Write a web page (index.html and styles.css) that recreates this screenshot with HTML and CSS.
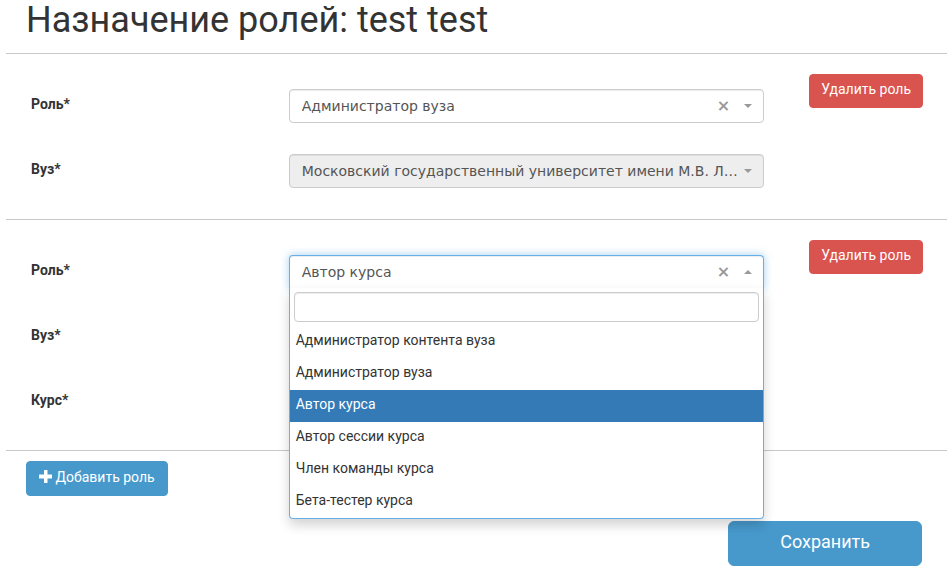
FILE: index.html
```html
<!DOCTYPE html>
<html lang="ru">
<head>
<meta charset="utf-8">
<title>Назначение ролей</title>
<link rel="stylesheet" href="styles.css">
</head>
<body>
<form class="page">
  <h1 class="title">Назначение ролей: test test</h1>

  <section class="role">
    <div class="fields">
      <label class="label" for="role-1">Роль*</label>
      <div class="picker">
        <select class="select" id="role-1"><option>Администратор вуза</option></select>
        <button class="clear" type="button">×</button>
        <span class="arrow"></span>
      </div>
      <label class="label" for="org-1">Вуз*</label>
      <div class="picker">
        <select class="select" id="org-1" disabled><option>Московский государственный университет имени М.В. Ломоносова</option></select>
        <span class="arrow"></span>
      </div>
    </div>
    <button class="btn btn-danger" type="button">Удалить роль</button>
  </section>

  <section class="role">
    <div class="fields">
      <label class="label" for="role-2">Роль*</label>
      <div class="picker picker-open">
        <select class="select" id="role-2"><option>Автор курса</option></select>
        <button class="clear" type="button">×</button>
        <span class="arrow"></span>
        <div class="menu">
          <div class="search"><input class="search-input" type="search"></div>
          <ul class="options" role="listbox">
            <li class="option" role="option">Администратор контента вуза</li>
            <li class="option" role="option">Администратор вуза</li>
            <li class="option option-active" role="option" aria-selected="true">Автор курса</li>
            <li class="option" role="option">Автор сессии курса</li>
            <li class="option" role="option">Член команды курса</li>
            <li class="option" role="option">Бета-тестер курса</li>
          </ul>
        </div>
      </div>
      <label class="label" for="org-2">Вуз*</label>
      <div class="picker"><select class="select" id="org-2"></select></div>
      <label class="label" for="course-2">Курс*</label>
      <div class="picker"><select class="select" id="course-2"></select></div>
    </div>
    <button class="btn btn-danger" type="button">Удалить роль</button>
  </section>

  <footer class="actions">
    <button class="btn btn-primary btn-add" type="button">
      <svg class="plus" viewBox="0 0 13 13" aria-hidden="true"><path d="M5 0.5Q5 0 5.5 0H8Q8.500 0 8.500 0.500V4.500H12.500Q13 4.500 13 5V8Q13 8.500 12.500 8.500H8.500V12.500Q8.500 13 8 13H5.500Q5 13 5 12.500V8.500H0.500Q0 8.500 0 8V5Q0 4.500 0.500 4.500H5Z"/></svg>
      Добавить роль
    </button>
    <button class="btn btn-primary btn-save" type="submit">Сохранить</button>
  </footer>
</form>
</body>
</html>
```
FILE: styles.css
```css
* {
  box-sizing: border-box;
}

body {
  margin: 0;
  background: #fff;
  color: #333;
  font: 14px/20px Roboto, sans-serif;
}

.page {
  margin: 0 3px 0 6px;
}

.title {
  margin: 0;
  padding: 0 20px 13px;
  font-size: 36px;
  line-height: 40px;
  font-weight: 400;
}

.role {
  display: flex;
  align-items: flex-start;
  gap: 45px;
  padding: 0 24px 0 25px;
  border-top: 1px solid #c8c8c8;
}

.role .btn-danger {
  margin-top: 20px;
}

.fields {
  flex: 1;
  display: grid;
  grid-template-columns: 258fr 476fr;
  row-gap: 31px;
  padding: 35px 0 31px;
}

.label {
  padding-top: 5px;
  font-weight: 700;
}

.picker {
  position: relative;
  min-width: 0;
}

.select {
  display: block;
  width: 100%;
  height: 34px;
  padding: 6px 24px 6px 12px;
  appearance: none;
  border: 1px solid #ccc;
  border-radius: 4px;
  background: #fff;
  box-shadow: inset 0 1px 1px rgba(0, 0, 0, 0.075);
  color: #555;
  font: 14px/20px "DejaVu Sans", sans-serif;
  text-overflow: ellipsis;
  overflow: hidden;
  white-space: nowrap;
}

.select:disabled {
  background: #eee;
  color: #555;
  opacity: 1;
}

.clear {
  position: absolute;
  top: 7px;
  right: 34px;
  padding: 0;
  border: 0;
  background: none;
  color: #999;
  font: bold 16px/20px "DejaVu Sans", sans-serif;
}

.arrow {
  position: absolute;
  top: 15px;
  right: 12px;
  border: 4px solid transparent;
  border-top-color: #999;
  border-bottom: 0;
}

.picker-open .select {
  border-color: #66afe9;
  border-bottom-color: transparent;
  border-radius: 4px 4px 0 0;
  box-shadow: inset 0 1px 1px rgba(0, 0, 0, 0.075), 0 0 8px rgba(102, 175, 233, 0.6);
}

.picker-open .arrow {
  border-top: 0;
  border-bottom: 4px solid #999;
}

.menu {
  position: absolute;
  z-index: 1;
  top: 33px;
  left: 0;
  right: 0;
  border: 1px solid #66afe9;
  border-top: 0;
  border-radius: 0 0 4px 4px;
  background: #fff;
  box-shadow: 0 6px 12px rgba(0, 0, 0, 0.175);
}

.search {
  padding: 4px;
}

.search-input {
  display: block;
  width: 100%;
  height: 30px;
  padding: 4px;
  appearance: none;
  border: 1px solid #ccc;
  border-radius: 4px;
  background: #fff;
  box-shadow: inset 0 1px 1px rgba(0, 0, 0, 0.075);
  font: inherit;
}

.options {
  margin: 0;
  padding: 0;
  list-style: none;
}

.option {
  padding: 4px 6px 8px;
}

.option-active {
  background: #337ab7;
  color: #fff;
}

.btn {
  padding: 5px 12px 7px;
  border: 1px solid transparent;
  border-radius: 4px;
  color: #fff;
  font: inherit;
  white-space: nowrap;
}

.btn-danger {
  padding: 4px 11px 8px;
  border-color: #d9534f;
  background: #d9534f;
}

.btn-primary {
  border-color: #4799cc;
  background: #4799cc;
}

.btn-add {
  padding-bottom: 8px;
}

.plus {
  width: 13px;
  height: 13px;
  vertical-align: -1px;
  fill: #fff;
}

.actions {
  display: flex;
  flex-direction: column;
  align-items: flex-start;
  gap: 25px;
  padding: 10px 25px 10px 20px;
  border-top: 1px solid #c8c8c8;
}

.btn-save {
  align-self: flex-end;
  padding: 8px 51px 11px;
  border-radius: 6px;
  font-size: 18px;
  line-height: 24px;
}
```
